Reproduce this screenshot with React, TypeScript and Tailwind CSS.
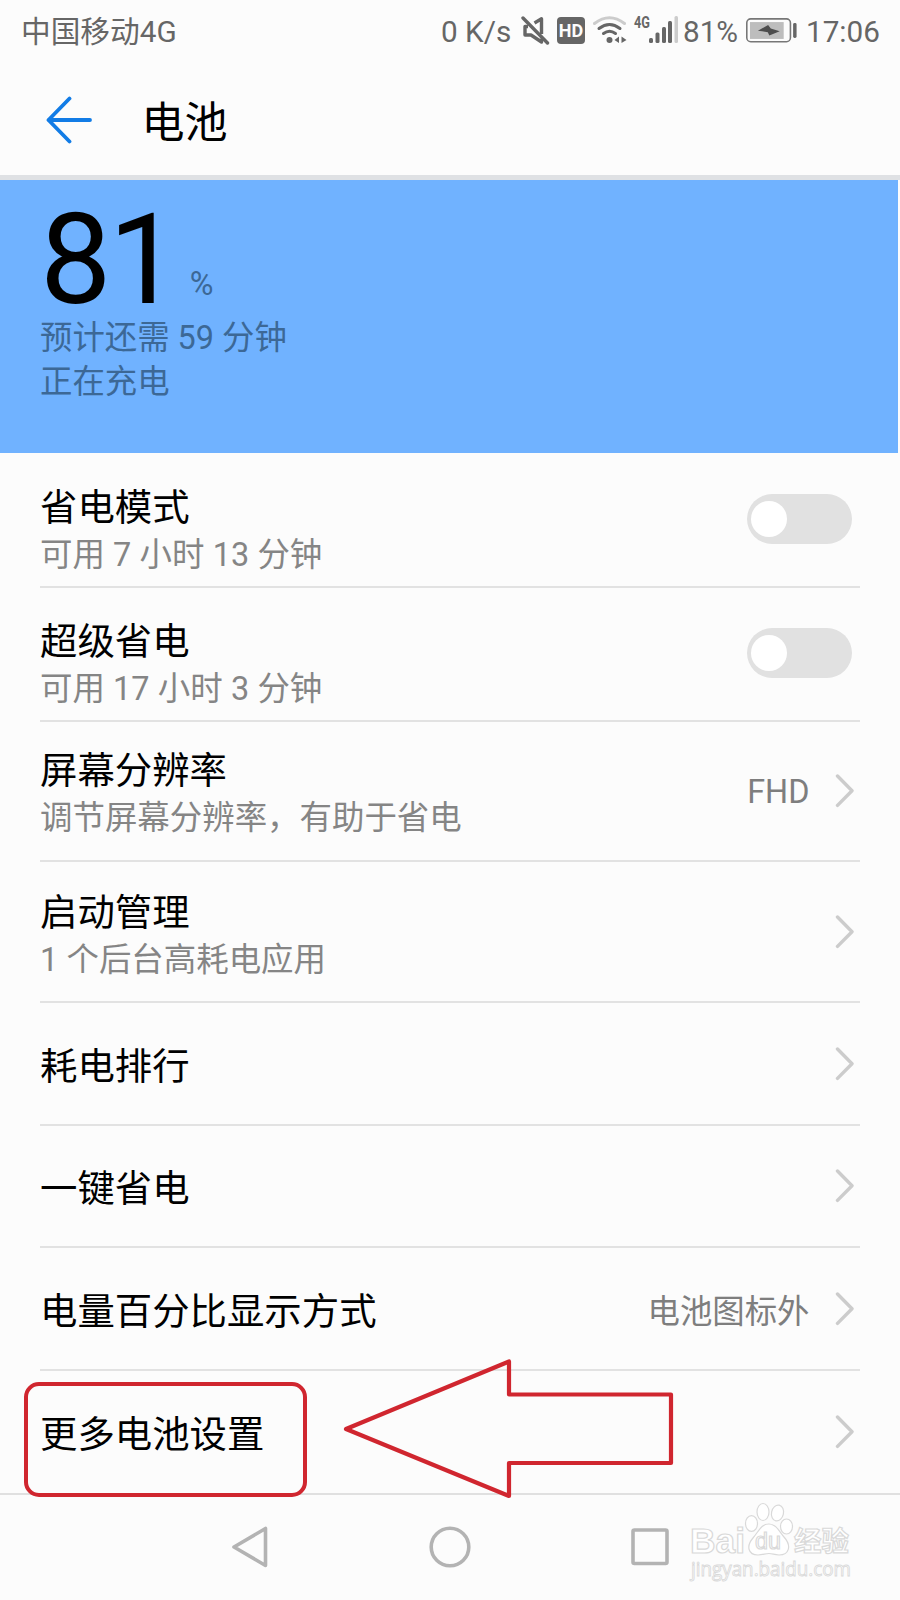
import { useState } from 'react'

const FONT = "font-['Roboto','Noto_Sans_CJK_SC',sans-serif]"

type Row = {
  title: string
  desc?: string
  value?: string
  toggle?: boolean
  height: string
  pad: string
}

const rows: Row[] = [
  { title: '省电模式', desc: '可用 7 小时 13 分钟', toggle: true, height: 'h-[135px]', pad: 'pt-[30px]' },
  { title: '超级省电', desc: '可用 17 小时 3 分钟', toggle: true, height: 'h-[134px]', pad: 'pt-[29px]' },
  { title: '屏幕分辨率', desc: '调节屏幕分辨率，有助于省电', value: 'FHD', height: 'h-[140px]', pad: 'pt-[24px]' },
  { title: '启动管理', desc: '1 个后台高耗电应用', height: 'h-[141px]', pad: 'pt-[26px]' },
  { title: '耗电排行', height: 'h-[123px]', pad: 'pt-[38.500px]' },
  { title: '一键省电', height: 'h-[122px]', pad: 'pt-[38px]' },
  { title: '电量百分比显示方式', value: '电池图标外', height: 'h-[123px]', pad: 'pt-[39px]' },
  { title: '更多电池设置', height: 'h-[124px]', pad: 'pt-[39px]' },
]

function StatusBar() {
  return (
    <div className="flex h-[62px] items-center pl-[21px] text-[29.700px] leading-[60px] whitespace-nowrap text-[#666]">
      <span className="w-[420px] pt-[2px]">中国移动4G</span>
      <span className="w-[80px] pt-[2px]">0 K/s</span>
      {/* 静音 */}
      <svg className="w-[36px] shrink-0" width="36" height="32" viewBox="521 15 36 32" fill="none" stroke="#666" strokeWidth="3.400">
        <path d="M534.500 23 541.500 18.800V34M528 26.500H525V35H531L541.500 42V38.500" strokeLinejoin="round" />
        <path d="M523 18 547.500 43" strokeLinecap="round" />
      </svg>
      <span className="mr-[8px] mb-px flex h-[27px] w-[28px] shrink-0 items-center justify-center rounded-[4px] bg-[#666] text-[18px] leading-none font-bold text-[#fcfcfc]">
        HD
      </span>
      {/* Wi-Fi */}
      <svg className="w-[40px] shrink-0" width="40" height="32" viewBox="593 15 40 32" fill="none" strokeWidth="3" strokeLinecap="round">
        <path d="M594.500 23.500Q609.500 12 624.500 23.500" stroke="#ccc" />
        <path d="M599 28.500Q609.500 20.500 620 28.500M603.500 33.500Q609.500 29 615.500 33.500" stroke="#666" />
        <circle cx="609.500" cy="40" r="3" fill="#666" />
        <path d="M619 36.500V43L614.500 40ZM621.500 36.500V43L626.500 40Z" fill="#666" />
      </svg>
      {/* 信号 */}
      <svg className="w-[50px] shrink-0 overflow-visible" width="50" height="32" viewBox="633 15 50 32" fill="#666">
        <text x="634" y="28" fontSize="16" fontWeight="700" textLength="16" lengthAdjust="spacingAndGlyphs">4G</text>
        <rect x="649" y="38" width="4" height="5" rx="1.500" />
        <rect x="655.500" y="32.500" width="4" height="10.500" rx="1.500" />
        <rect x="662" y="27" width="4" height="16" rx="1.500" />
        <rect x="668" y="21" width="4" height="22" rx="1.500" />
        <rect x="674.500" y="16" width="3.500" height="27" rx="1.500" fill="#ccc" />
      </svg>
      <span className="w-[62.500px] pt-[2px]">81%</span>
      {/* 电池 */}
      <svg className="w-[60.500px] shrink-0" width="61" height="32" viewBox="746 15 61 32">
        <rect x="746.800" y="18.800" width="44" height="23" rx="4" fill="none" stroke="#777" strokeWidth="1.600" />
        <rect x="750" y="22" width="34" height="17" fill="#bdbdbd" />
        <path d="M768.300 25 771 28.600 780 31.300 769.500 35.500 768 32.200 758 30.700Z" fill="#4d4d4d" />
        <rect x="793.500" y="23" width="3.500" height="15" rx="1.500" fill="#666" />
      </svg>
      <span className="pt-[2px]">17:06</span>
    </div>
  )
}

function Toggle() {
  const [on, setOn] = useState(false)
  return (
    <button
      onClick={() => setOn(!on)}
      className={`mr-[8px] mb-[2px] flex h-[50px] w-[105px] items-center rounded-full px-[4px] ${on ? 'justify-end bg-[#007dff]' : 'bg-[#e1e1e1]'}`}
    >
      <span className="h-[36px] w-[36px] rounded-full bg-white" />
    </button>
  )
}

function Chevron() {
  return (
    <svg className="mr-[5px] ml-[25.500px]" width="20" height="34" viewBox="0 0 20 34" fill="none" stroke="#ccc" strokeWidth="3.400" strokeLinecap="round" strokeLinejoin="round">
      <path d="M2.500 2 17 16.700 2.500 31.400" />
    </svg>
  )
}

function SettingRow({ row }: { row: Row }) {
  return (
    <div className={`mx-[40px] flex shrink-0 items-center border-b-2 border-[#e2e2e2] ${row.height}`}>
      <div className={`flex-1 self-start whitespace-nowrap ${row.pad}`}>
        <p className="text-[37.400px] leading-[50px] text-black">{row.title}</p>
        {row.desc && <p className="text-[32.450px] leading-[45px] [word-spacing:0.2px] text-[#858585]">{row.desc}</p>}
      </div>
      {row.value && (
        <span className={`text-[32.400px] leading-[45px] text-[#7e7e7e] ${row.value === 'FHD' ? 'pt-[2px]' : 'pt-[7px]'}`}>{row.value}</span>
      )}
      {row.toggle ? <Toggle /> : <Chevron />}
    </div>
  )
}

function NavBar() {
  return (
    <div className="flex h-[106px] items-start pt-[31px] pl-[230px]">
      <svg width="40" height="42" viewBox="0 0 40 42" fill="none" stroke="#b3b3b3" strokeWidth="3.600" strokeLinejoin="round">
        <path d="M4 21 35.500 2.500V39.500Z" />
      </svg>
      <svg className="ml-[159px]" width="42" height="42" viewBox="0 0 42 42" fill="none" stroke="#b3b3b3" strokeWidth="3.600">
        <circle cx="21" cy="21" r="18.800" />
      </svg>
      <svg className="ml-[160px]" width="38" height="42" viewBox="0 0 38 42" fill="none" stroke="#b3b3b3" strokeWidth="3.600">
        <rect x="2" y="4" width="34" height="33.500" rx="1.500" />
      </svg>
    </div>
  )
}

function Watermark() {
  return (
    <svg className="absolute top-[1500px] left-[680px]" width="190" height="96" viewBox="680 1500 190 96" fill="#fff" stroke="#d9d9d9" strokeWidth="1.200">
      <text x="690" y="1553" fontSize="35" fontWeight="700" fontFamily="Liberation Sans" textLength="55" lengthAdjust="spacingAndGlyphs">Bai</text>
      <ellipse cx="751.500" cy="1523.500" rx="6" ry="7.800" />
      <ellipse cx="763" cy="1512" rx="6" ry="8.500" />
      <ellipse cx="777.500" cy="1513" rx="6" ry="8" transform="rotate(12 777.500 1513)" />
      <ellipse cx="786.500" cy="1526.500" rx="6" ry="7.500" />
      <path d="M769 1524C776 1524 779 1531 784 1537C792 1546 789 1555 779 1555C774 1555 773 1553.500 769 1553.500C765 1553.500 763 1555 758 1555C748 1555 746 1546 753 1538C759 1531 761 1524 769 1524Z" />
      <text x="755" y="1549" fontSize="24" fontFamily="Liberation Sans" textLength="26" lengthAdjust="spacingAndGlyphs">du</text>
      <text x="794" y="1551" fontSize="27.500" fontWeight="700" fontFamily="Noto Sans CJK SC">经验</text>
      <text x="691" y="1576" fontSize="20" strokeWidth="0.900" fontFamily="Open Sans" textLength="160" lengthAdjust="spacingAndGlyphs">jingyan.baidu.com</text>
    </svg>
  )
}

export default function App() {
  return (
    <div className={`relative flex h-[1600px] w-[900px] flex-col overflow-hidden bg-[#fcfcfc] ${FONT}`}>
      <StatusBar />

      <div className="flex h-[118px] shrink-0 items-center border-b-[5px] border-[#dfe1e4] pl-[45px]">
        <svg className="mt-[2px]" width="48" height="48" viewBox="0 0 48 48" fill="none" stroke="#127ce6" strokeWidth="3.800" strokeLinecap="round" strokeLinejoin="round">
          <path d="M24.500 2.500 3.500 24 24.500 45.500M3.500 24H45" />
        </svg>
        <h1 className="ml-[48.500px] pt-[9px] text-[43px] leading-[60px] text-black">电池</h1>
      </div>

      {/* 电量 */}
      <div className="h-[273px] w-[898px] shrink-0 bg-[#70b2ff] pt-[14px] pl-[40px] text-[32.400px] leading-[44.500px] text-[#3c6896]">
        <div className="flex h-[121.500px] items-end">
          <span className="text-[127px] leading-[113px] tracking-[-3px] text-black">81</span>
          <span className="mb-[9.500px] ml-[13px]">%</span>
        </div>
        <p>预计还需 59 分钟</p>
        <p>正在充电</p>
      </div>

      {rows.map((row) => (
        <SettingRow key={row.title} row={row} />
      ))}

      <NavBar />

      {/* 标注 */}
      <div className="absolute top-[1493px] left-0 h-[1.500px] w-[900px] bg-[#e0e0e0]" />
      <div className="absolute top-[1382px] left-[24px] h-[115px] w-[283px] rounded-[15px] border-4 border-[#d0262f]" />
      <svg className="absolute top-[1355px] left-[340px]" width="340" height="148" viewBox="340 1355 340 148" fill="none" stroke="#d0262f" strokeWidth="4.200" strokeLinejoin="round">
        <path d="M346 1429 509 1361.500V1394.500H671V1463H509V1496Z" />
      </svg>
      <Watermark />
    </div>
  )
}
